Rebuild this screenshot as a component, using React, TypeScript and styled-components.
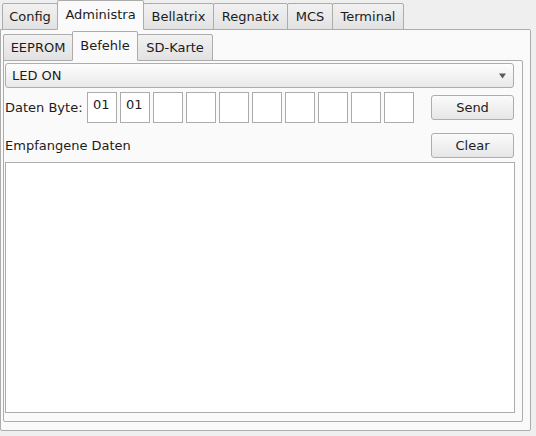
import styled, { createGlobalStyle } from 'styled-components';

const GlobalStyle = createGlobalStyle`
  * { box-sizing: border-box; }
  body {
    margin: 0;
    background: #efefef;
    font-family: "DejaVu Sans", "Liberation Sans", sans-serif;
    font-size: 13px;
    color: #1c1c1c;
  }
`;

const Window = styled.div`
  width: 536px;
  height: 436px;
  display: flex;
  flex-direction: column;
  padding: 0 5px 5px 0;
  background: #efefef;
`;

const TabBar = styled.div<{ $inset: number }>`
  position: relative;
  z-index: 1;
  display: flex;
  align-items: flex-end;
  height: 30px;
  margin-bottom: -1px;
  padding-left: ${(p) => p.$inset}px;
`;

const Tab = styled.div<{ $active?: boolean; $width: number }>`
  position: relative;
  z-index: ${(p) => (p.$active ? 2 : 1)};
  width: ${(p) => p.$width}px;
  height: ${(p) => (p.$active ? 30 : 27)}px;
  margin-left: -1px;
  display: flex;
  align-items: center;
  justify-content: center;
  border: 1px solid #acacac;
  border-bottom-color: ${(p) => (p.$active ? 'transparent' : '#acacac')};
  border-radius: 2px 2px 0 0;
  background: ${(p) =>
    p.$active ? '#fafafa' : 'linear-gradient(#f1f1f1, #e2e2e2)'};
  white-space: nowrap;
  padding-bottom: 1px;

  &:first-child {
    margin-left: 0;
  }
`;

const Pane = styled.div<{ $pad: string }>`
  flex: 1;
  display: flex;
  flex-direction: column;
  border: 1px solid #acacac;
  border-radius: 0 2px 2px 2px;
  background: #fafafa;
  padding: ${(p) => p.$pad};
`;

const Combo = styled.div`
  height: 25px;
  margin-right: 1px;
  display: flex;
  align-items: center;
  justify-content: space-between;
  padding: 0 7px 0 6px;
  border: 1px solid #adadad;
  border-radius: 3px;
  background: linear-gradient(#fdfdfd, #e9e9e9);
`;

const Row = styled.div<{ $top: number; $height: number }>`
  display: flex;
  align-items: center;
  margin-top: ${(p) => p.$top}px;
  height: ${(p) => p.$height}px;
`;

const Label = styled.span<{ $width?: number }>`
  width: ${(p) => (p.$width ? `${p.$width}px` : 'auto')};
  flex-shrink: 0;
`;

const Fields = styled.div`
  display: flex;
  gap: 3px;
  align-self: stretch;
`;

const ByteField = styled.div`
  width: 30px;
  height: 31px;
  padding: 4px 0 0 5px;
  line-height: 15px;
  border: 1px solid #acacac;
  background: #ffffff;
`;

const Button = styled.div<{ $top?: number }>`
  margin-left: auto;
  margin-right: 1px;
  align-self: flex-start;
  margin-top: ${(p) => p.$top ?? 0}px;
  width: 83px;
  height: 25px;
  display: flex;
  align-items: center;
  justify-content: center;
  border: 1px solid #adadad;
  border-radius: 3px;
  background: linear-gradient(#fbfbfb, #e6e6e6);
`;

const Output = styled.div`
  flex: 1;
  margin-top: 4px;
  border: 1px solid #acacac;
  background: #ffffff;
`;

const mainTabs = [
  { label: 'Config', width: 56 },
  { label: 'Administra', width: 87, active: true },
  { label: 'Bellatrix', width: 71 },
  { label: 'Regnatix', width: 75 },
  { label: 'MCS', width: 46 },
  { label: 'Terminal', width: 72 },
];

const subTabs = [
  { label: 'EEPROM', width: 70 },
  { label: 'Befehle', width: 66, active: true },
  { label: 'SD-Karte', width: 76 },
];

const bytes = ['01', '01', '', '', '', '', '', '', '', ''];

const App: React.FC = () => {
  return (
    <Window>
      <GlobalStyle />
      <TabBar $inset={2}>
        {mainTabs.map((t) => (
          <Tab key={t.label} $width={t.width} $active={t.active}>
            {t.label}
          </Tab>
        ))}
      </TabBar>
      <Pane $pad="1px 7px 8px 2px">
        <TabBar $inset={0}>
          {subTabs.map((t) => (
            <Tab key={t.label} $width={t.width} $active={t.active}>
              {t.label}
            </Tab>
          ))}
        </TabBar>
        <Pane $pad="2px 7px 8px 1px">
          <Combo>
            <span>LED ON</span>
            <svg width="7" height="6" viewBox="0 0 7 6">
              <path d="M0 0.5 H7 L3.5 5.5 Z" fill="#5a5a5a" />
            </svg>
          </Combo>
          <Row $top={4} $height={31}>
            <Label $width={82}>Daten Byte:</Label>
            <Fields>
              {bytes.map((b, i) => (
                <ByteField key={i}>{b}</ByteField>
              ))}
            </Fields>
            <Button $top={3}>Send</Button>
          </Row>
          <Row $top={10} $height={25}>
            <Label>Empfangene Daten</Label>
            <Button>Clear</Button>
          </Row>
          <Output />
        </Pane>
      </Pane>
    </Window>
  );
};

export default App;
